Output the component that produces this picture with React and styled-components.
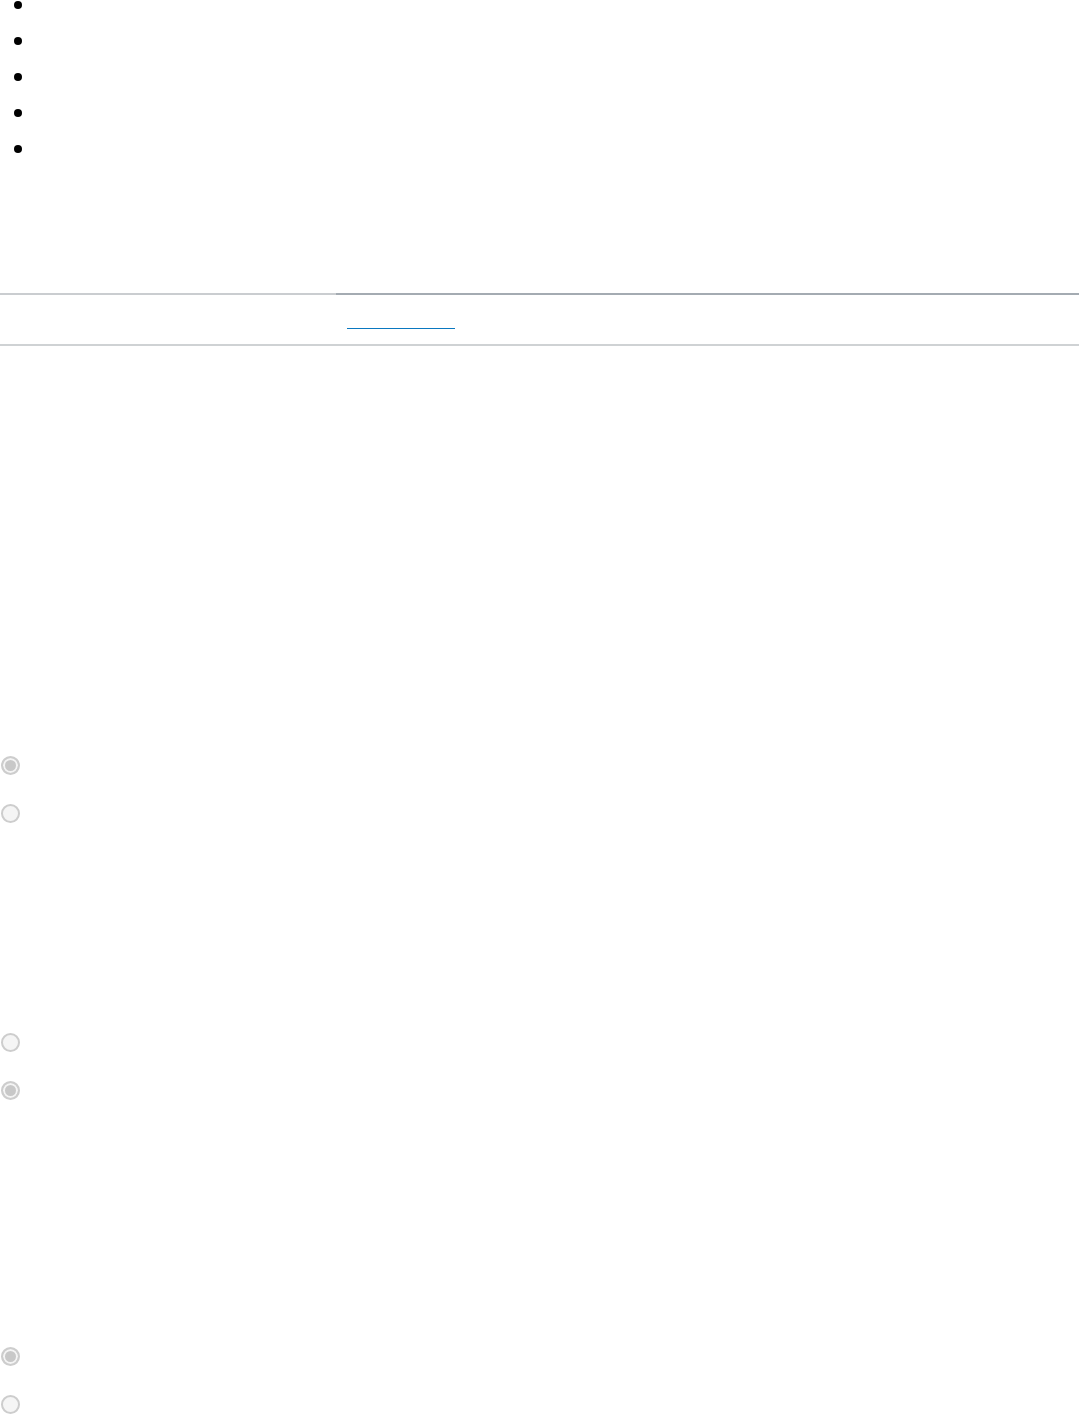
import React from "react";
import styled, { createGlobalStyle } from "styled-components";

const GlobalStyle = createGlobalStyle`
  html, body {
    margin: 0;
    padding: 0;
    background: #ffffff;
    font-family: "Liberation Sans", Arial, sans-serif;
  }
`;

const BULLETS = 5;

const RADIO_GROUPS = [
  { gap: 395, checked: 0 },
  { gap: 181, checked: 1 },
  { gap: 218, checked: 0 },
];

function App() {
  return (
    <Page>
      <GlobalStyle />
      <List>
        {Array.from({ length: BULLETS }).map((_, i) => (
          <ListItem key={i}>
            <Dot />
          </ListItem>
        ))}
      </List>

      <TabBar>
        <TabSpacer />
        <TabActive>
          <TabLink href="#" aria-label="tab" />
        </TabActive>
      </TabBar>

      {RADIO_GROUPS.map((group, g) => (
        <RadioGroup key={g} $gap={group.gap}>
          {[0, 1].map((r) => (
            <RadioRow key={r}>
              <Radio $checked={group.checked === r} />
            </RadioRow>
          ))}
        </RadioGroup>
      ))}
    </Page>
  );
}

const Page = styled.div`
  width: 1079px;
  height: 1414px;
  overflow: hidden;
`;

const List = styled.ul`
  margin: 0;
  padding: 0;
  list-style: none;
`;

const ListItem = styled.li`
  display: flex;
  align-items: flex-start;
  height: 36px;
`;

const Dot = styled.span`
  width: 8px;
  height: 8px;
  margin: 1px 0 0 14px;
  border-radius: 50%;
  background: #000000;
`;

const TabBar = styled.nav`
  display: flex;
  margin-top: 113px;
  border-bottom: 2px solid #cfd2d4;
`;

const TabSpacer = styled.div`
  width: 336px;
  border-top: 2px solid #cacdd0;
`;

const TabActive = styled.div`
  flex: 1;
  height: 49px;
  padding-left: 11px;
  border-top: 2px solid #a4abb2;
`;

const TabLink = styled.a`
  display: block;
  width: 108px;
  height: 33px;
  border-bottom: 1px solid #0a78c0;
`;

const RadioGroup = styled.div`
  margin-top: ${(p) => p.$gap}px;
`;

const RadioRow = styled.div`
  display: flex;
  align-items: center;
  height: 48px;
`;

const Radio = styled.span`
  box-sizing: border-box;
  width: 19px;
  height: 19px;
  margin-left: 1px;
  border-radius: 50%;
  border: 2px solid #cdcdcd;
  background: ${(p) => (p.$checked ? "#c8c8c8" : "#f5f5f5")};
  box-shadow: ${(p) => (p.$checked ? "inset 0 0 0 2px #f4f4f4" : "none")};
`;

export default App;
